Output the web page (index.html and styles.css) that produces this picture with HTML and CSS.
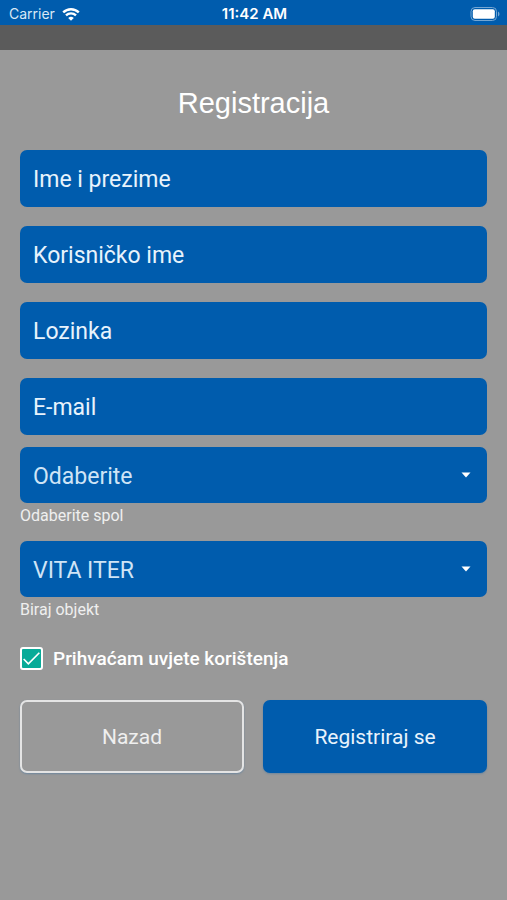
FILE: index.html
```html
<!DOCTYPE html>
<html lang="hr">
<head>
  <meta charset="utf-8">
  <meta name="viewport" content="width=device-width, initial-scale=1">
  <title>Registracija</title>
  <link rel="stylesheet" href="styles.css">
</head>
<body>
  <header class="status">
    <span class="carrier">Carrier
      <svg class="wifi" viewBox="0 0 18 14" aria-hidden="true">
        <path d="M1.2 5.4a11.2 11.2 0 0 1 15.6 0" />
        <path d="M4 8.4a7.2 7.2 0 0 1 10 0" />
        <path class="dot" d="M6.2 11a4 4 0 0 1 5.6 0L9 13.8z" />
      </svg>
    </span>
    <time class="clock">11:42 AM</time>
    <svg class="battery" viewBox="0 0 30 14" aria-hidden="true">
      <rect class="shell" x="1" y=".5" width="25.5" height="13" rx="4" />
      <rect class="charge" x="2.8" y="2.2" width="22" height="9.6" rx="2" />
      <path class="cap" d="M28 4.5a2.8 2.8 0 0 1 0 5z" />
    </svg>
  </header>
  <div class="strip"></div>
  <main class="page">
    <h1 class="title">Registracija</h1>
    <form class="form">
      <div class="fields">
        <input class="field" type="text" placeholder="Ime i prezime" aria-label="Ime i prezime">
        <input class="field" type="text" placeholder="Korisničko ime" aria-label="Korisničko ime">
        <input class="field" type="password" placeholder="Lozinka" aria-label="Lozinka">
        <input class="field" type="email" placeholder="E-mail" aria-label="E-mail">
      </div>
      <div class="choice">
        <div class="picker">
          <select class="select" id="spol"><option>Odaberite</option></select>
          <svg class="arrow" viewBox="0 0 10 6" aria-hidden="true"><path d="M.5.5h9L5 5.5z" /></svg>
        </div>
        <label class="caption" for="spol">Odaberite spol</label>
      </div>
      <div class="choice">
        <div class="picker">
          <select class="select" id="objekt"><option>VITA ITER</option></select>
          <svg class="arrow" viewBox="0 0 10 6" aria-hidden="true"><path d="M.5.5h9L5 5.5z" /></svg>
        </div>
        <label class="caption" for="objekt">Biraj objekt</label>
      </div>
      <label class="terms">
        <span class="tick">
          <input class="box" type="checkbox" checked>
          <svg class="mark" viewBox="0 0 22 22" aria-hidden="true"><path d="M3.5 11.5l4.5 4.5L18.5 5.5" /></svg>
        </span>
        <span>Prihvaćam uvjete korištenja</span>
      </label>
      <div class="actions">
        <button class="button outline" type="button">Nazad</button>
        <button class="button" type="submit">Registriraj se</button>
      </div>
    </form>
  </main>
</body>
</html>
```

FILE: styles.css
```css
* {
  box-sizing: border-box;
}

body {
  margin: 0;
  min-height: 100vh;
  background: #999;
  color: #fff;
  font-family: Roboto, "Noto Sans", sans-serif;
}

.status {
  display: grid;
  grid-template-columns: 1fr auto 1fr;
  align-items: center;
  height: 25px;
  padding: 2px 7px 0 9px;
  background: #005cad;
  font-family: Inter, sans-serif;
  font-size: 14px;
}

.carrier {
  display: flex;
  align-items: center;
  gap: 7px;
  color: #d9e8f5;
}

.wifi {
  width: 18px;
  height: 14px;
  fill: none;
  stroke: #fff;
  stroke-width: 2.4;
}

.wifi .dot {
  fill: #fff;
  stroke: none;
}

.clock {
  font-size: 15px;
  font-weight: 600;
}

.battery {
  justify-self: end;
  width: 30px;
  height: 14px;
}

.shell {
  fill: none;
  stroke: #75a6d2;
}

.charge {
  fill: #fff;
}

.cap {
  fill: #75a6d2;
}

.strip {
  height: 25px;
  background: #5b5b5b;
}

.page {
  padding: 36px 20px 32px;
}

.title {
  margin: 0 0 30px;
  font: 400 29px/34px "Liberation Sans", sans-serif;
  text-align: center;
}

.fields {
  display: grid;
  gap: 19px;
  margin-bottom: 12px;
}

.field,
.select {
  display: block;
  width: 100%;
  padding: 2px 13px 0;
  border: 0;
  border-radius: 7px;
  background: #005cad;
  color: #fff;
  font-family: inherit;
  font-size: 23px;
  font-weight: 400;
}

.field {
  height: 57px;
}

.field::placeholder {
  color: #e8f3fc;
  opacity: 1;
}

.select {
  height: 56px;
  appearance: none;
  color: #cfe4f6;
}

.choice {
  margin-bottom: 12px;
}

.picker {
  display: grid;
  align-items: center;
}

.picker > * {
  grid-area: 1 / 1;
}

.arrow {
  justify-self: end;
  width: 10px;
  height: 6px;
  margin-right: 16px;
  fill: #fff;
  pointer-events: none;
}

.caption {
  display: block;
  color: #efefef;
  font-size: 16px;
  line-height: 26px;
}

.terms {
  display: flex;
  align-items: center;
  gap: 10px;
  margin: 24px 0 30px;
  font-size: 19px;
  font-weight: 500;
  line-height: 23px;
}

.tick {
  display: grid;
}

.tick > * {
  grid-area: 1 / 1;
}

.box {
  width: 23px;
  height: 23px;
  margin: 0;
  appearance: none;
  border: 2px solid #fff;
  border-radius: 3px;
  background: #08ab98;
}

.mark {
  width: 23px;
  height: 23px;
  fill: none;
  stroke: #fff;
  stroke-width: 1.6;
  pointer-events: none;
}

.actions {
  display: grid;
  grid-template-columns: 1fr 1fr;
  gap: 19px;
}

.button {
  height: 73px;
  padding: 0;
  border: 0;
  border-radius: 7px;
  background: #005cad;
  box-shadow: 0 1px 2px #6e879e;
  color: #e8f3fc;
  font-family: inherit;
  font-size: 21px;
}

.outline {
  border: 2px solid #e4e4e4;
  background: #999;
  color: #efefef;
}
```
